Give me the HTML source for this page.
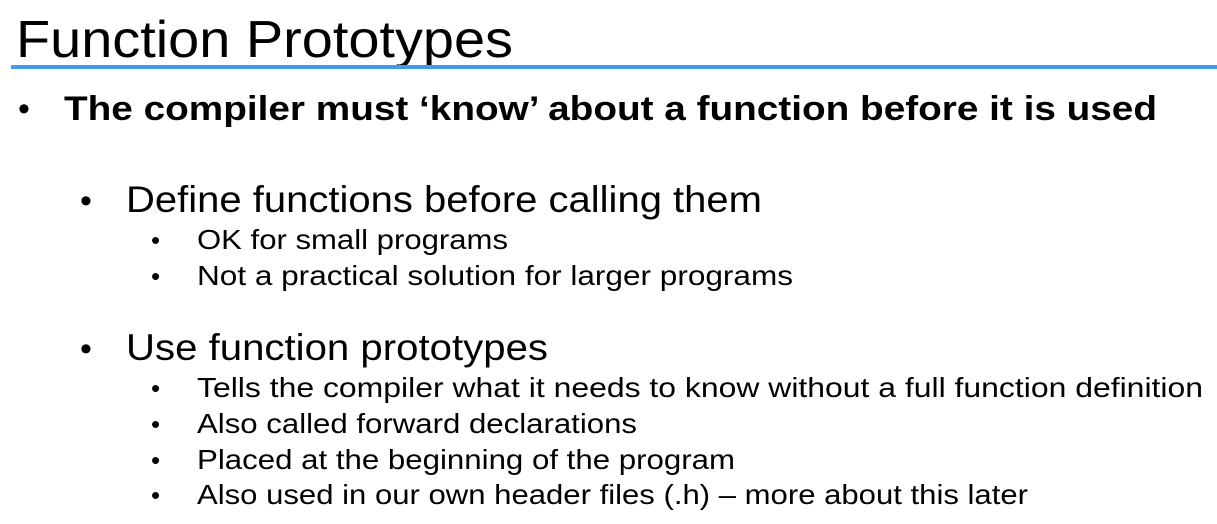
<!DOCTYPE html>
<html><head><meta charset="utf-8"><style>html,body{margin:0;padding:0;background:#fff;}svg{display:block}</style></head><body>
<svg width="1217" height="524" xmlns="http://www.w3.org/2000/svg" font-family="Liberation Sans, sans-serif" fill="#000">
<text x="16" y="57" font-size="52" textLength="497" lengthAdjust="spacingAndGlyphs">Function Prototypes</text>
<rect x="11" y="65" width="1206" height="4" fill="#3d9ef0"/>
<text x="18" y="120" font-size="34">•</text>
<text x="64" y="120" font-size="34" font-weight="bold" textLength="1093" lengthAdjust="spacingAndGlyphs">The compiler must ‘know’ about a function before it is used</text>
<text x="80" y="212" font-size="34">•</text>
<text x="126" y="212" font-size="37" textLength="636" lengthAdjust="spacingAndGlyphs">Define functions before calling them</text>
<text x="151" y="249" font-size="26">•</text>
<text x="197" y="249" font-size="28" textLength="311" lengthAdjust="spacingAndGlyphs">OK for small programs</text>
<text x="151" y="285" font-size="26">•</text>
<text x="197" y="285" font-size="28" textLength="596" lengthAdjust="spacingAndGlyphs">Not a practical solution for larger programs</text>
<text x="80" y="360" font-size="34">•</text>
<text x="126" y="360" font-size="37" textLength="422" lengthAdjust="spacingAndGlyphs">Use function prototypes</text>
<text x="151" y="397" font-size="26">•</text>
<text x="197" y="397" font-size="28" textLength="1006" lengthAdjust="spacingAndGlyphs">Tells the compiler what it needs to know without a full function definition</text>
<text x="151" y="433" font-size="26">•</text>
<text x="197" y="433" font-size="28" textLength="440" lengthAdjust="spacingAndGlyphs">Also called forward declarations</text>
<text x="151" y="469" font-size="26">•</text>
<text x="197" y="469" font-size="28" textLength="538" lengthAdjust="spacingAndGlyphs">Placed at the beginning of the program</text>
<text x="151" y="504" font-size="26">•</text>
<text x="197" y="504" font-size="28" textLength="831" lengthAdjust="spacingAndGlyphs">Also used in our own header files (.h) – more about this later</text>
</svg>
</body></html>
